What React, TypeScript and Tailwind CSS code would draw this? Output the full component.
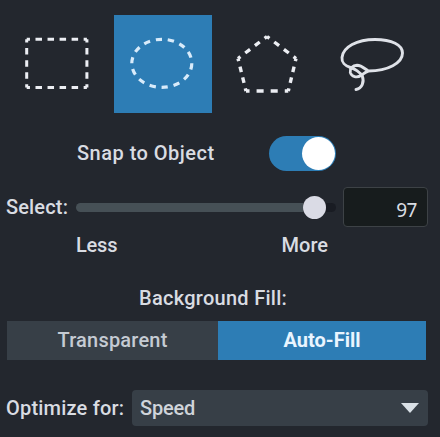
import { useState } from "react";

const label = "font-['Roboto','Liberation_Sans',sans-serif] font-medium text-[20px] leading-6 whitespace-nowrap";

function RectangleIcon() {
  return (
    <svg className="h-full w-full" viewBox="9 15 98 98" fill="none" stroke="#eceef3" strokeWidth="3">
      <path d="M26.7 39.3H86.9M86.9 87.5H26.7" pathLength="10" strokeDasharray=".54 .46" strokeDashoffset=".27" />
      <path d="M26.7 39.3V87.5M86.9 39.3V87.5" pathLength="8" strokeDasharray=".54 .46" strokeDashoffset=".27" />
    </svg>
  );
}

function EllipseIcon() {
  return (
    <svg className="h-full w-full" viewBox="114 15 98 98" fill="none" stroke="#d8ebfa" strokeWidth="3.2">
      <ellipse cx="161.8" cy="63.3" rx="30" ry="24" pathLength="14" strokeDasharray=".52 .48" strokeDashoffset="0" />
    </svg>
  );
}

function PentagonIcon() {
  return (
    <svg className="h-full w-full" viewBox="219 15 98 98" fill="none" stroke="#eceef3" strokeWidth="3.4" strokeDasharray=".5 .5" strokeDashoffset=".25">
      <path d="M267 36.5 296 58.5" pathLength="3" />
      <path d="M296 58.5 288.3 91" pathLength="3" />
      <path d="M288.3 91H246" pathLength="3" />
      <path d="M246 91 238 58.5" pathLength="3" />
      <path d="M238 58.5 267 36.5" pathLength="3" />
    </svg>
  );
}

function LassoIcon() {
  return (
    <svg className="h-full w-full" viewBox="324 15 98 98" fill="none" stroke="#dfe2e8" strokeWidth="2.9" strokeLinecap="round" strokeLinejoin="round">
      <path d="M350.500 67.500C345 66 341.500 62 342 57.500C343 47 357 39.500 375 39.500C392 39.500 402.500 45 402.500 53C402.500 63 388 70.800 368.500 71C365 69.500 362.500 65.500 357 65.300C352.500 65.300 349.500 69 350.300 72.500C351.500 77 357 78 361 75.500C364 73.500 365 72 368.500 71" />
      <path d="M350.500 67.500C354.500 68.500 360.500 72.500 362.300 76C364.500 82 362 88.500 356 89.500" />
    </svg>
  );
}

export default function App() {
  const [tool, setTool] = useState(1);
  const tools = [RectangleIcon, EllipseIcon, PentagonIcon, LassoIcon];
  return (
    <main className={`flex h-[437px] w-[440px] flex-col overflow-hidden bg-[#23272e] text-[#d9dce2] ${label}`}>
      <div className="mt-[15px] ml-[9px] flex gap-[7px]">
        {tools.map((Icon, i) => (
          <button key={i} onClick={() => setTool(i)} className={`size-[98px] ${tool === i ? "bg-[#2d7db5]" : ""}`}>
            <Icon />
          </button>
        ))}
      </div>
      <div className="mt-[22px] flex h-9 items-center pl-[77px]">
        <span className="w-[192px] tracking-[0.48px]">Snap to Object</span>
        <span className="flex h-[35px] w-[67px] items-center justify-end rounded-full bg-[#2d7db5] pr-px">
          <span className="size-[33px] rounded-full bg-white" />
        </span>
      </div>
      <div className="mt-4 flex h-10 items-center pl-[6px]">
        <span className="w-[70px] pb-px tracking-[0.15px]">Select:</span>
        <div className="flex w-[260px] items-center">
          <span className="h-[9px] w-[227px] rounded-l-full bg-[#465056]" />
          <span className="size-[23px] shrink-0 rounded-full bg-[#dadbe5]" />
          <span className="h-[9px] w-[10px] rounded-r-full bg-[#191c23]" />
        </div>
        <div className="ml-[7px] flex h-10 w-[85px] items-center justify-end rounded-[4px] border border-[#3d4246] bg-[#171c1d] pt-[5px] pr-[10px] font-['Noto_Sans',sans-serif] text-[19px] font-normal tracking-[-0.5px]">97</div>
      </div>
      <div className="mt-[6px] flex h-6 justify-between pr-[112px] pl-[76px]">
        <span className="tracking-[-0.2px]">Less</span>
        <span>More</span>
      </div>
      <div className="mt-[29px] pl-[139px] tracking-[0.28px]">Background Fill:</div>
      <div className="mt-[11px] ml-[7px] flex h-[39px] w-[419px]">
        <button className="w-[211px] bg-[#373f47] pb-[2px] tracking-[0.2px] text-[#c5cbd3]">Transparent</button>
        <button className="w-[208px] bg-[#2d7db5] pb-[2px] font-bold text-[#e9f5ff]">Auto-Fill</button>
      </div>
      <div className="mt-[30px] flex h-9 items-center pl-[6px]">
        <span className="w-[126px] tracking-[0.2px]">Optimize for:</span>
        <div className="flex h-9 w-[296px] items-center justify-between rounded-[4px] bg-[#373f47] pr-[9px] pl-2 text-[#d0d4da]">
          <span className="tracking-[-0.2px]">Speed</span>
          <svg className="h-[10px] w-[18px]" viewBox="0 0 18 10" fill="#d9e0e6"><path d="M0 0H18L9 10Z" /></svg>
        </div>
      </div>
    </main>
  );
}
